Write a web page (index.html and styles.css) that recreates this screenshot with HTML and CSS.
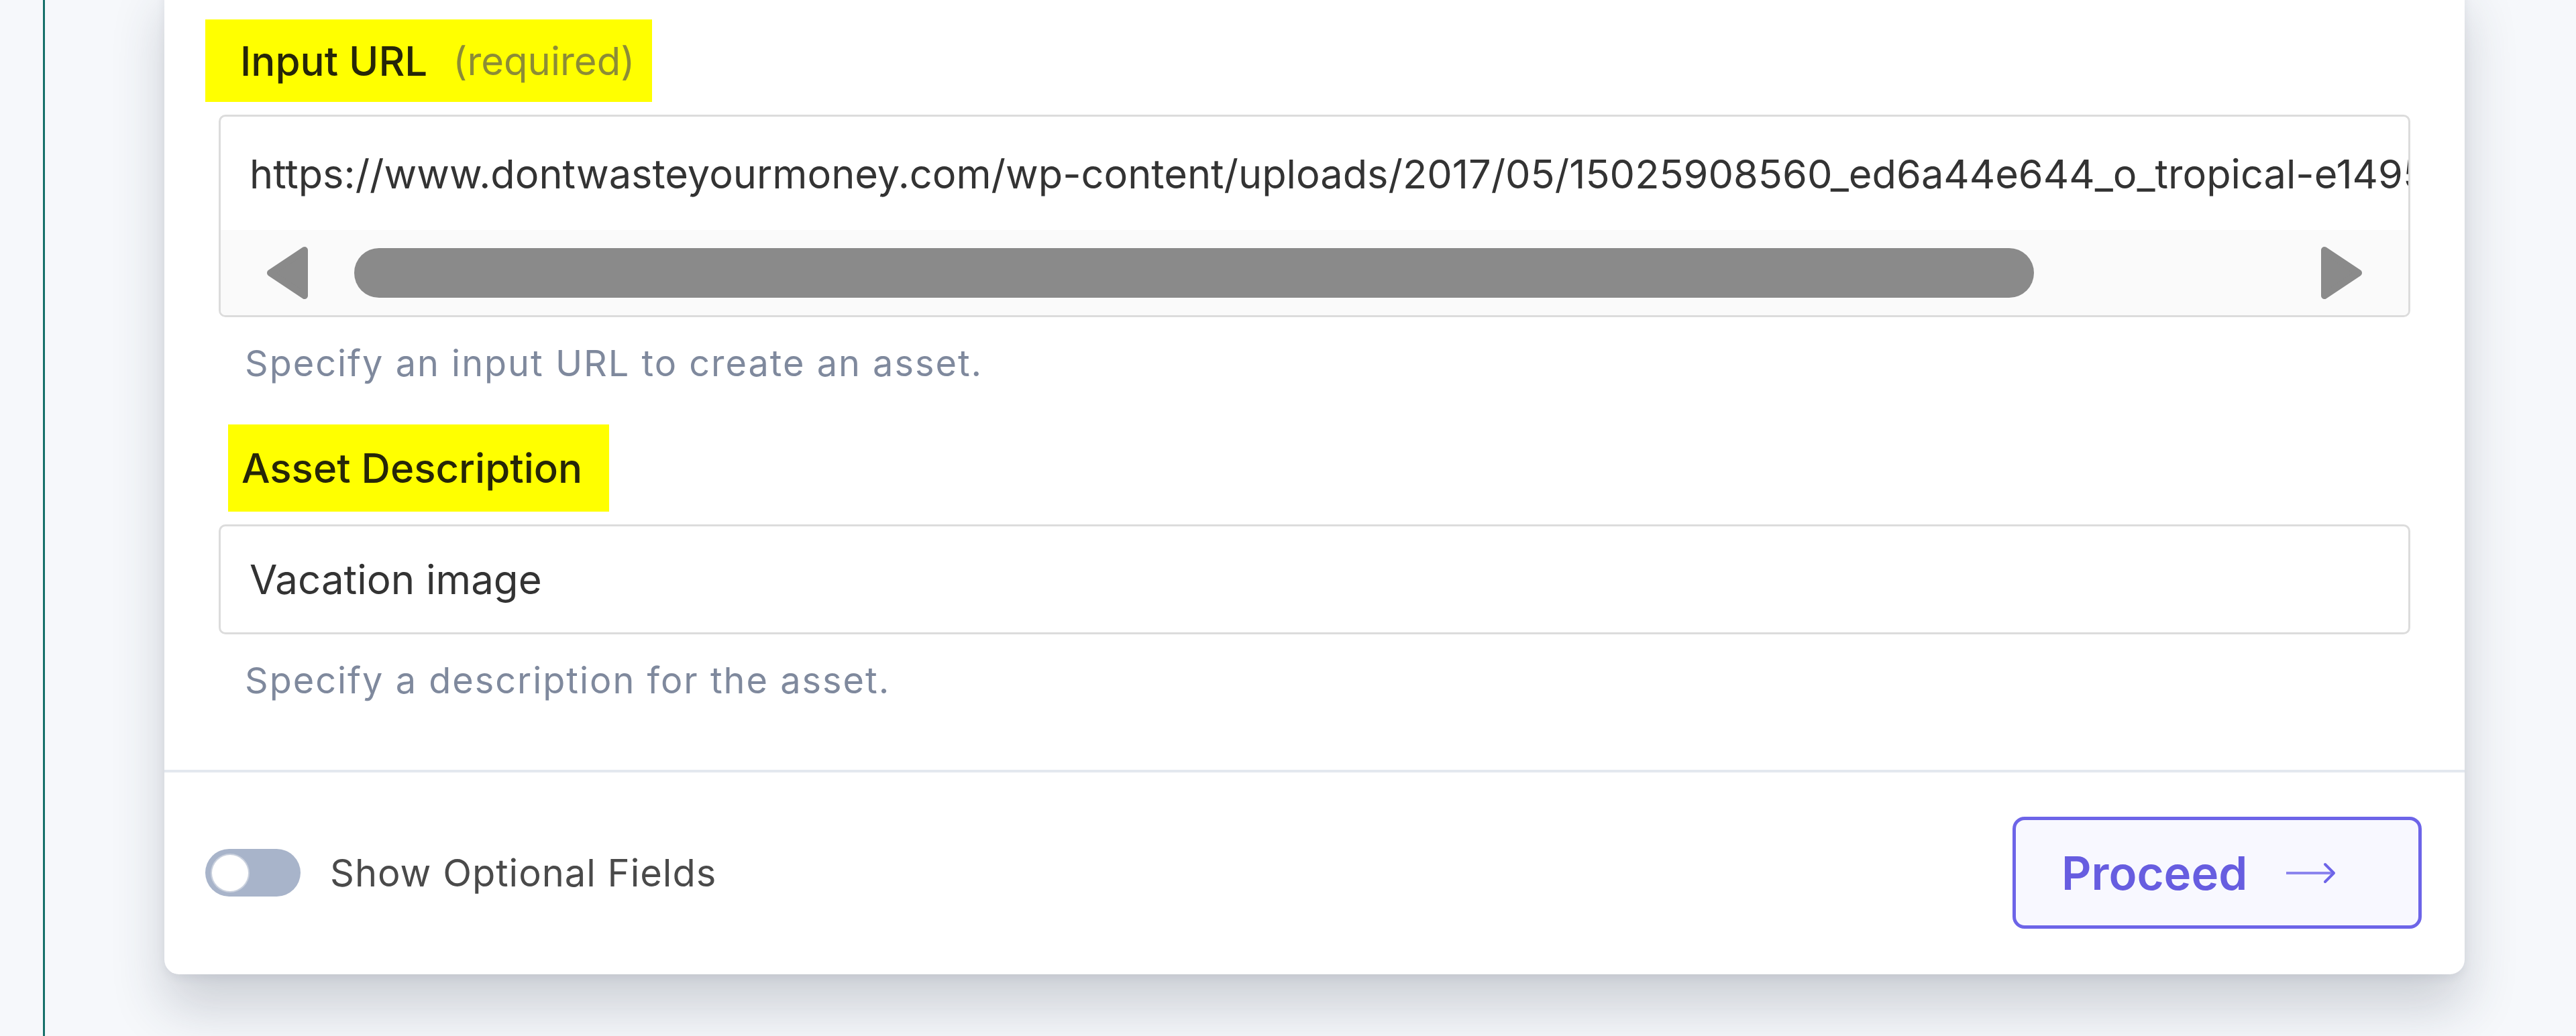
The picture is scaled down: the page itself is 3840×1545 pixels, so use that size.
FILE: index.html
```html
<!DOCTYPE html>
<html lang="en">
<head>
    <meta charset="UTF-8">
    <meta name="viewport" content="width=device-width, initial-scale=1.0">
    <title>Create Asset</title>
    <link rel="stylesheet" href="styles.css">
</head>
<body>
    <div class="page">
        <!-- Left rail -->
        <div class="sidebar"></div>

        <!-- Main content -->
        <div class="content">
            <div class="card">
                <div class="form">
                    <!-- Input URL -->
                    <div class="field-label label-url">
                        <span>Input URL</span>
                        <span class="required">(required)</span>
                    </div>
                    <div class="url-input">
                        <div class="url-text">https://www.dontwasteyourmoney.com/wp-content/uploads/2017/05/15025908560_ed6a44e644_o_tropical-e1495730413547.jpg</div>
                        <div class="scrollbar">
                            <svg class="scroll-arrow" width="63" height="80" viewBox="0 0 63 80">
                                <path d="M57 6 L6 40 L57 74 Z" fill="#8a8a8a" stroke="#8a8a8a" stroke-width="10" stroke-linejoin="round"/>
                            </svg>
                            <div class="scroll-thumb"></div>
                            <div class="scroll-space"></div>
                            <svg class="scroll-arrow" width="63" height="80" viewBox="0 0 63 80">
                                <path d="M6 6 L57 40 L6 74 Z" fill="#8a8a8a" stroke="#8a8a8a" stroke-width="10" stroke-linejoin="round"/>
                            </svg>
                        </div>
                    </div>
                    <p class="helper">Specify an input URL to create an asset.</p>

                    <!-- Asset Description -->
                    <div class="field-label label-desc">Asset Description</div>
                    <div class="text-input">Vacation image</div>
                    <p class="helper">Specify a description for the asset.</p>
                </div>

                <!-- Footer -->
                <div class="card-footer">
                    <div class="toggle-group">
                        <div class="toggle"><div class="knob"></div></div>
                        <span class="toggle-label">Show Optional Fields</span>
                    </div>
                    <button class="proceed">
                        <span>Proceed</span>
                        <svg width="76" height="40" viewBox="0 0 76 40">
                            <line x1="2" y1="20" x2="72" y2="20" stroke="#8c85ee" stroke-width="4"/>
                            <polyline points="60,7 73,20 60,33" fill="none" stroke="#6d64e8" stroke-width="4" stroke-linecap="round" stroke-linejoin="round"/>
                        </svg>
                    </button>
                </div>
            </div>
        </div>
    </div>
</body>
</html>
```

FILE: styles.css
```css
/* General */
* {
    box-sizing: border-box;
}

html, body {
    margin: 0;
    height: 100%;
}

body {
    font-family: 'Inter', 'Noto Sans', sans-serif;
    background: #f6f8fb;
    overflow: hidden;
}

.page {
    display: flex;
    height: 100vh;
}

/* Left rail */
.sidebar {
    width: 67px;
    flex: none;
    border-right: 3px solid #16706a;
}

.content {
    flex: 1;
    min-width: 0;
    padding: 0 166px 0 178px;
}

/* Card */
.card {
    margin-top: -40px;
    background: #fff;
    border-radius: 22px;
    box-shadow: 0 50px 80px rgba(40, 48, 70, 0.2), 0 6px 14px rgba(40, 48, 70, 0.07);
}

.form {
    padding: 69px 81px 95px 81px;
    border-bottom: 4px solid #e3e8ef;
}

/* Highlighted labels */
.field-label {
    display: flex;
    align-items: center;
    width: fit-content;
    background: #ffff00;
    font-size: 60px;
    font-weight: 500;
    color: #262608;
}

.label-url {
    height: 123px;
    margin-left: -20px;
    padding: 0 26px 0 52px;
}

.label-url .required {
    margin-left: 38px;
    font-size: 58px;
    font-weight: 400;
    color: #8c8c36;
}

.label-desc {
    height: 130px;
    margin-top: 53px;
    margin-left: 14px;
    padding: 0 40px 0 20px;
}

/* URL field with scrollbar */
.url-input {
    margin-top: 19px;
    height: 302px;
    border: 3px solid #dcdcdc;
    border-radius: 10px;
    overflow: hidden;
    display: flex;
    flex-direction: column;
}

.url-text {
    flex: 1;
    display: flex;
    align-items: center;
    padding-left: 43px;
    white-space: nowrap;
    overflow: hidden;
    font-size: 59.5px;
    color: #333;
}

.scrollbar {
    height: 127px;
    background: #fafafa;
    display: flex;
    align-items: center;
    padding: 0 68px;
}

.scroll-arrow {
    flex: none;
}

.scroll-thumb {
    width: 2504px;
    height: 74px;
    margin-left: 68px;
    border-radius: 37px;
    background: #8a8a8a;
}

.scroll-space {
    flex: 1;
}

/* Plain text field */
.text-input {
    margin-top: 19px;
    height: 164px;
    border: 3px solid #dcdcdc;
    border-radius: 10px;
    display: flex;
    align-items: center;
    padding-left: 43px;
    font-size: 60px;
    color: #333;
}

.helper {
    margin: 31px 0 0 0;
    padding-left: 39px;
    font-size: 54px;
    line-height: 76px;
    letter-spacing: 2px;
    color: #7f899d;
}

/* Footer */
.card-footer {
    display: flex;
    justify-content: space-between;
    align-items: center;
    padding: 66px 64px 68px 61px;
}

.toggle-group {
    display: flex;
    align-items: center;
    gap: 44px;
}

.toggle {
    width: 142px;
    height: 71px;
    border-radius: 36px;
    background: #a8b4ca;
    display: flex;
    align-items: center;
    padding-left: 10px;
}

.knob {
    width: 54px;
    height: 54px;
    border-radius: 50%;
    background: #fff;
    box-shadow: 0 0 0 2px #c9d0dd;
}

.toggle-label {
    font-size: 56px;
    letter-spacing: 1px;
    color: #4a4a4a;
}

.proceed {
    width: 610px;
    height: 167px;
    border: 5px solid #6d64e8;
    border-radius: 18px;
    background: #f8f8ff;
    display: flex;
    align-items: center;
    gap: 56px;
    padding: 0 0 0 68px;
    font-family: 'Inter', 'Noto Sans', sans-serif;
    font-size: 69px;
    font-weight: 600;
    color: #675de0;
    cursor: pointer;
}
```
